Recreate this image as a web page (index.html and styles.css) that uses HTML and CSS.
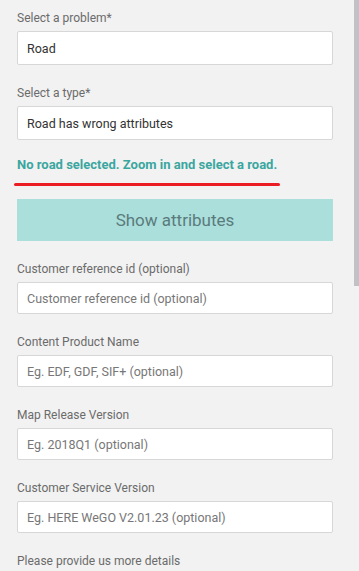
FILE: index.html
```html
<!DOCTYPE html>
<html>
<head>
	<title>Report a problem</title>
	<meta charset="utf-8">
	<meta name="viewport" content="width=device-width, initial-scale=1">
	<link rel="stylesheet" href="styles.css">
</head>
<body>

	<form class="report-form">

		<div class="field">
			<label for="problem">Select a problem*</label>
			<input class="input input-tall" id="problem" type="text" value="Road">
		</div>

		<div class="field">
			<label for="type">Select a type*</label>
			<input class="input input-tall" id="type" type="text" value="Road has wrong attributes">
		</div>

		<p class="notice">No road selected. Zoom in and select a road.</p>

		<button class="btn-attributes" type="button" disabled>Show attributes</button>

		<div class="field">
			<label for="ref">Customer reference id (optional)</label>
			<input class="input" id="ref" type="text" placeholder="Customer reference id (optional)">
		</div>

		<div class="field">
			<label for="product">Content Product Name</label>
			<input class="input" id="product" type="text" placeholder="Eg. EDF, GDF, SIF+ (optional)">
		</div>

		<div class="field">
			<label for="release">Map Release Version</label>
			<input class="input" id="release" type="text" placeholder="Eg. 2018Q1 (optional)">
		</div>

		<div class="field">
			<label for="service">Customer Service Version</label>
			<input class="input" id="service" type="text" placeholder="Eg. HERE WeGO V2.01.23 (optional)">
		</div>

		<div class="field">
			<label for="details">Please provide us more details</label>
		</div>

	</form>

	<div class="scrollbar"><div class="scrollbar-thumb"></div></div>

</body>
</html>
```

FILE: styles.css
```css
*,
*:before,
*:after {
	box-sizing: border-box;
}

html,
body {
	height: 100%;
	overflow: hidden;
}

body {
	margin: 0;
	background-color: #f2f2f2;
	font-family: Roboto, "Open Sans", sans-serif;
	color: #333;
}

.report-form {
	padding: 9px 26px 0 17px;
}

.field {
	margin-bottom: 19px;
}

.field label {
	display: block;
	font-size: 12px;
	line-height: 18px;
	color: #6b6b6b;
	margin-bottom: 4px;
}

.input {
	display: block;
	width: 100%;
	height: 32px;
	padding: 0 9px;
	background-color: #fff;
	border: 1px solid #d7d7d7;
	border-radius: 2px;
	font-family: inherit;
	font-size: 12.5px;
	color: #333;
}

.input::placeholder {
	color: #777;
}

.input-tall {
	height: 34px;
}

.notice {
	margin: -2px 0 0;
	padding-bottom: 13px;
	font-size: 13px;
	line-height: 16px;
	font-weight: bold;
	color: #3aa6a0;
	position: relative;
}

/* red marker under the notice */
.notice:after {
	content: "";
	position: absolute;
	left: -3px;
	width: 266px;
	bottom: 0;
	height: 3px;
	border-radius: 2px;
	background-color: #ec1c24;
}

.btn-attributes {
	display: block;
	width: 100%;
	height: 42px;
	margin: 13px 0 19px;
	background-color: #abdfdc;
	border: 0;
	font-family: inherit;
	font-size: 17px;
	color: #5a7b7b;
}

.scrollbar {
	position: fixed;
	top: 0;
	right: 0;
	width: 5px;
	height: 100%;
}

.scrollbar-thumb {
	height: 286px;
	background-color: #c2c2c6;
}
```
